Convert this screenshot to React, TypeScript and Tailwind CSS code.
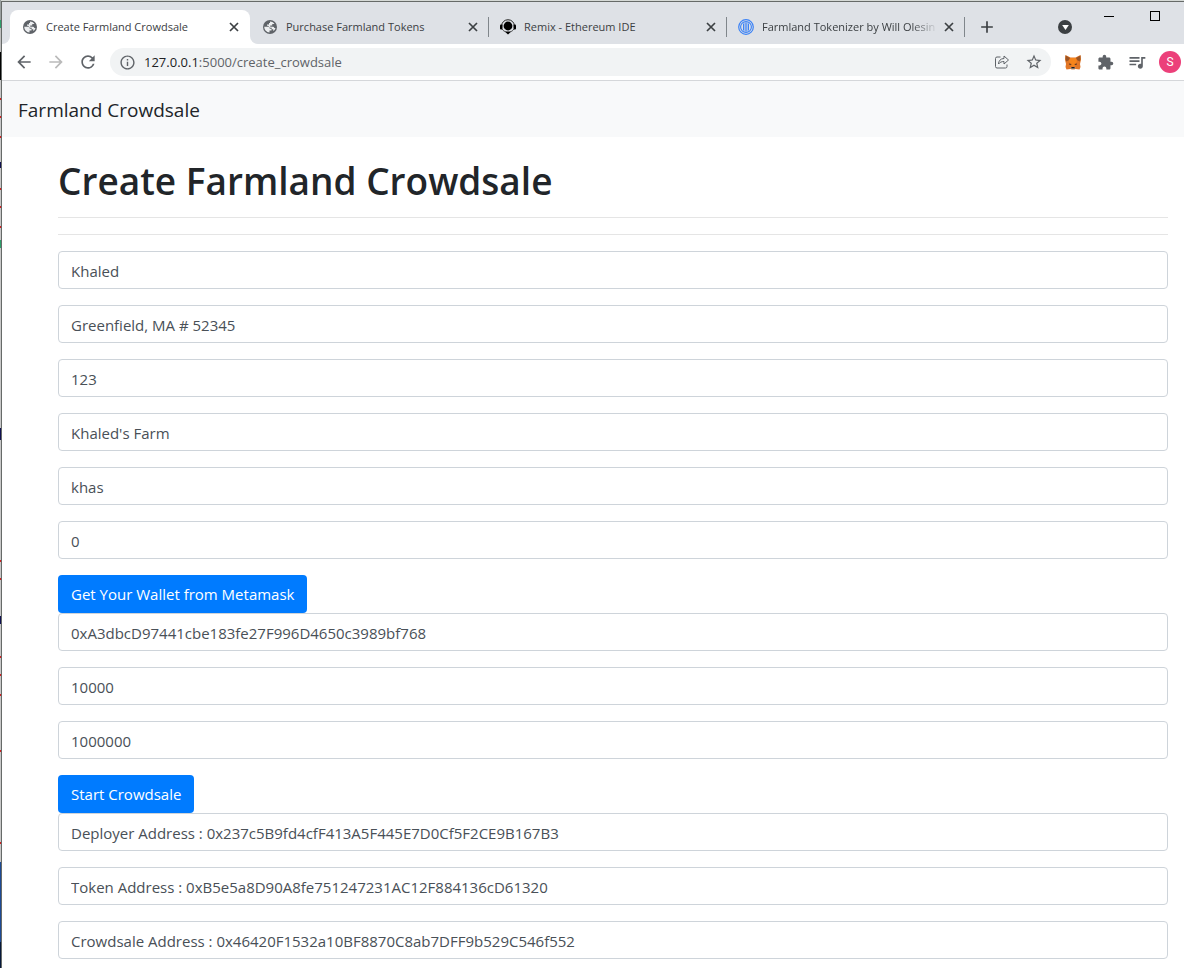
import React from "react";
import {
  MdAdd,
  MdArrowBack,
  MdArrowForward,
  MdExtension,
  MdInfoOutline,
  MdQueueMusic,
  MdRefresh,
  MdStarBorder,
} from "react-icons/md";

function GlobeIcon() {
  return (
    <svg viewBox="0 0 28 28" className="size-[14px]" aria-hidden="true">
      <circle cx="14" cy="14" r="14" fill="#5f6368" />
      <path
        d="M2.500 13.500h7c3 0 4 1.500 4 4h3.500v3.500h-4v4C7 24.500 2.500 19.500 2.500 13.500z"
        fill="#eceef0"
      />
      <path
        d="M14 3c3.500 0 6.500 1.500 8.500 4v1h-4v3h-4v2.500h6c1.500 0 1.500 2 2.500 2.500h2c-1 3-2.500 5-4.500 6v-3.500h-3v-3h-4l-3.500-4h-2V9h4V6h2z"
        fill="#eceef0"
      />
    </svg>
  );
}

function RemixIcon() {
  return (
    <svg viewBox="0 0 32 32" className="size-4" aria-hidden="true">
      <path d="M3.500 13a12.500 11.500 0 0 1 25 0" fill="none" stroke="#222" strokeWidth="2" />
      <circle cx="16" cy="14" r="8.800" />
      <rect x="0" y="11" width="5" height="10" rx="2" />
      <rect x="27" y="11" width="5" height="10" rx="2" />
      <path d="M4 20c2 3 5 5 7 5.500M28 20c-2 3-5 5-7 5.500" fill="none" stroke="#222" strokeWidth="1.600" />
      <path d="M9.500 25h13L16 31z" />
    </svg>
  );
}

function TokenizerIcon() {
  return (
    <svg viewBox="0 0 32 32" className="size-4" fill="none" stroke="#3b82f6" aria-hidden="true">
      <circle cx="16" cy="16" r="14.600" strokeWidth="2.400" />
      <circle cx="16" cy="16" r="10.800" strokeWidth="2.200" />
      <path d="M11 9v14M14.300 7v18M17.700 7v18M21 9v14" strokeWidth="2" />
    </svg>
  );
}

function FoxIcon() {
  return (
    <svg viewBox="0 0 32 30" className="h-[15px] w-4" aria-hidden="true">
      <path d="M1 0l10 5h10l10-5 1 9-2 9 1 6-2 5-8-1-3 1h-4l-3-1-8 1-2-5 1-6-2-9z" fill="#e27625" />
      <path d="M1 1l9 5-3 5-5 2-1-6zM31 1l-9 5 3 5 5 2 1-6z" fill="#9a5424" />
      <path d="M11 6h10l3 6-3 6-2 5h-6l-2-5-3-6z" fill="#f6851b" />
      <path d="M8 17l5 1-1 2-4-1zM24 17l-5 1 1 2 4-1z" fill="#5a3524" />
      <path d="M11 25l3-1h4l3 1-1 3-2 1h-4l-2-1z" fill="#d9c8bb" />
      <path d="M13 24h6l1 3h-8z" fill="#1c1a1b" />
    </svg>
  );
}

function ShareIcon() {
  return (
    <svg viewBox="0 0 28 28" className="size-[14px]" fill="none" stroke="#5f6368" strokeWidth="2" strokeLinejoin="round" aria-hidden="true">
      <path d="M11 4H4a3 3 0 0 0-3 3v16a3 3 0 0 0 3 3h17a3 3 0 0 0 3-3v-4" />
      <path d="M18 2l9 8-9 8v-5c-5 0-8 1.500-11 5 0-6 4-11 11-11z" />
    </svg>
  );
}

function CloseIcon() {
  return (
    <svg viewBox="0 0 14 14" className="size-[14px]" fill="none" stroke="currentColor" strokeWidth="1.700" aria-hidden="true">
      <path d="M3 3l8 8M11 3l-8 8" />
    </svg>
  );
}

function TabItem({ icon, title, fade = false }: { icon: React.ReactNode; title: string; fade?: boolean }) {
  return (
    <>
      <button className="flex min-w-0 flex-1 items-center gap-2 text-left">
        <span className="flex w-4 shrink-0 justify-center">{icon}</span>
        <span className={fade ? "flex-1 whitespace-nowrap mask-r-from-85%" : "flex-1 whitespace-nowrap"}>{title}</span>
      </button>
      <button aria-label={`Close ${title}`} className="text-[#3c4043]">
        <CloseIcon />
      </button>
    </>
  );
}

const tabs = [
  { title: "Purchase Farmland Tokens", icon: <GlobeIcon />, fade: false },
  { title: "Remix - Ethereum IDE", icon: <RemixIcon />, fade: false },
  { title: "Farmland Tokenizer by Will Olesin", icon: <TokenizerIcon />, fade: true },
];

function TabStrip() {
  return (
    <div className="flex h-[42px] bg-[#dee1e6] text-[11px] text-[#3c4043]">
      <div className="mt-2 flex w-2 bg-white">
        <div className="flex-1 rounded-br-lg bg-[#dee1e6]" />
      </div>
      <div className="mt-2 flex w-60 items-center gap-1 rounded-t-lg bg-white pr-[9px] pl-3">
        <TabItem title="Create Farmland Crowdsale" icon={<GlobeIcon />} />
      </div>
      <div className="flex flex-1 bg-white">
        <div className="flex flex-1 rounded-bl-lg bg-[#dee1e6]">
          <div className="mt-2 flex items-center pl-px">
            {tabs.map((tab) => (
              <div key={tab.title} className="flex h-full w-[238px] items-center">
                <div className="flex min-w-0 flex-1 items-center gap-1 pr-2 pl-[11px]">
                  <TabItem title={tab.title} icon={tab.icon} fade={tab.fade} />
                </div>
                <div className="h-5 w-px bg-[#80868b]" />
              </div>
            ))}
            <button aria-label="New tab" className="ml-3 text-[#3c4043]">
              <MdAdd className="size-5" />
            </button>
          </div>
          <div className="ml-auto flex items-start pr-6">
            <button aria-label="Search tabs" className="mt-[18px] mr-8 flex size-[14px] items-center justify-center rounded-full bg-[#3c4043]">
              <svg viewBox="0 0 8 6" className="h-[5px] w-[7px]" aria-hidden="true">
                <path d="M0 0h8L4 6z" fill="#fff" />
              </svg>
            </button>
            <button aria-label="Minimize" className="mt-2 mr-9 flex h-3 w-[10px] items-center pt-px">
              <span className="h-px w-full bg-black" />
            </button>
            <button aria-label="Maximize" className="mt-[9px] size-[10px] border border-black" />
          </div>
        </div>
      </div>
    </div>
  );
}

function Toolbar() {
  return (
    <div className="flex h-[37px] items-center border-b border-[#d5d7da] pr-[3px] pl-3 text-[#5f6368]">
      <div className="flex items-center gap-3">
        <button aria-label="Back"><MdArrowBack className="size-5" /></button>
        <button aria-label="Forward" className="text-[#bababa]"><MdArrowForward className="size-5" /></button>
        <button aria-label="Reload"><MdRefresh className="size-5" /></button>
      </div>
      <div className="ml-3 flex h-7 flex-1 items-center rounded-full bg-[#f1f3f4] pr-2 pl-[9px]">
        <MdInfoOutline className="size-[17px]" />
        <a href="#" className="ml-2 flex-1 pt-px text-[13px]">
          <span className="text-[#202124]">127.0.0.1</span>:5000/create_crowdsale
        </a>
        <button aria-label="Share this page" className="mr-4"><ShareIcon /></button>
        <button aria-label="Bookmark this page"><MdStarBorder className="size-[18px]" /></button>
      </div>
      <div className="ml-3 flex items-center gap-3">
        <button aria-label="MetaMask" className="flex w-5 justify-center"><FoxIcon /></button>
        <button aria-label="Extensions" className="flex w-5 justify-center"><MdExtension className="size-[17px]" /></button>
        <button aria-label="Media controls"><MdQueueMusic className="size-5" /></button>
        <button aria-label="Profile" className="flex size-[22px] items-center justify-center rounded-full bg-[#ec407a] font-[Roboto,sans-serif] text-xs text-white">
          S
        </button>
      </div>
    </div>
  );
}

function Field({ label, value }: { label: string; value: string }) {
  return (
    <input
      aria-label={label}
      defaultValue={value}
      className="mb-4 block h-[38px] w-full rounded border border-[#ced4da] bg-white px-3 pt-px text-[15px] text-[#495057]"
    />
  );
}

function PrimaryButton({ children }: { children: React.ReactNode }) {
  return (
    <button type="button" className="block h-[38px] rounded bg-[#007bff] px-[13px] text-[15px] text-white">
      {children}
    </button>
  );
}

const edgeMarks = [
  "bg-[#9aa0a0] h-5", "bg-[#2f9e6b] h-2", "bg-[#bfbfbf] h-6", "bg-black h-7",
  "bg-[#c8c8c8] h-[18px]", "bg-[#d02020] h-0.5", "bg-[#c8c8c8] h-4", "bg-[#d02020] h-0.5",
  "bg-[#c8c8c8] h-[18px]", "bg-[#d02020] h-0.5", "bg-[#c8c8c8] h-6", "bg-[#101050] h-1.5",
  "bg-[#c8c8c8] h-5", "bg-[#d02020] h-0.5", "bg-[#c8c8c8] h-4", "bg-[#d02020] h-0.5",
  "bg-[#c8c8c8] h-[18px]", "bg-[#d02020] h-0.5", "bg-[#c8c8c8] h-3", "bg-[#2f9e6b] h-2",
  "bg-[#c8c8c8] h-[180px]", "bg-[#101050] h-3", "bg-[#c8c8c8] h-[120px]",
  "bg-[#d02020] h-0.5", "bg-[#c8c8c8] h-4", "bg-[#d02020] h-0.5", "bg-[#c8c8c8] h-9",
  "bg-[#101050] h-2", "bg-[#c8c8c8] h-8", "bg-[#d02020] h-0.5", "bg-[#c8c8c8] h-4",
  "bg-[#d02020] h-0.5", "bg-[#c8c8c8] h-[18px]", "bg-[#d02020] h-0.5", "bg-[#c8c8c8] h-[54px]",
  "bg-[#d02020] h-0.5", "bg-[#c8c8c8] h-[90px]", "bg-[#d02020] h-0.5", "bg-[#c8c8c8] h-[18px]",
  "bg-[#1d4a94] h-20", "bg-[#06183a] flex-1",
];

export default function App() {
  return (
    <div className="flex min-h-screen bg-white font-['Open_Sans','Noto_Sans',sans-serif]">
      <div className="flex w-px flex-col" aria-hidden="true">
        {edgeMarks.map((mark, i) => (
          <div key={i} className={mark} />
        ))}
      </div>
      <div className="flex min-w-0 flex-1 flex-col border-t border-[#d5d9d6]">
        <div className="flex-1 border-t border-l border-[#666a68]">
          <header>
            <TabStrip />
            <Toolbar />
          </header>
          <nav className="flex h-14 items-center bg-[#f8f9fa] px-4">
            <a href="#" className="pt-0.5 text-[19px] text-[#212529]">Farmland Crowdsale</a>
          </nav>
          <main className="pt-4 pr-4 pl-14">
            <h1 className="pt-1 text-[37px] leading-12 font-semibold text-[#212529]">Create Farmland Crowdsale</h1>
            <hr className="mt-3 border-[#e5e5e5]" />
            <hr className="mt-4 mb-4 border-[#e5e5e5]" />
            <form>
              <Field label="Name" value="Khaled" />
              <Field label="Farm location" value="Greenfield, MA # 52345" />
              <Field label="Farm size" value="123" />
              <Field label="Token name" value="Khaled's Farm" />
              <Field label="Token symbol" value="khas" />
              <Field label="Initial supply" value="0" />
              <PrimaryButton>Get Your Wallet from Metamask</PrimaryButton>
              <Field label="Wallet address" value="0xA3dbcD97441cbe183fe27F996D4650c3989bf768" />
              <Field label="Rate" value="10000" />
              <Field label="Goal" value="1000000" />
              <PrimaryButton>Start Crowdsale</PrimaryButton>
              <Field label="Deployer address" value="Deployer Address : 0x237c5B9fd4cfF413A5F445E7D0Cf5F2CE9B167B3" />
              <Field label="Token address" value="Token Address : 0xB5e5a8D90A8fe751247231AC12F884136cD61320" />
              <div className="-mb-2">
                <Field label="Crowdsale address" value="Crowdsale Address : 0x46420F1532a10BF8870C8ab7DFF9b529C546f552" />
              </div>
            </form>
          </main>
        </div>
      </div>
    </div>
  );
}
